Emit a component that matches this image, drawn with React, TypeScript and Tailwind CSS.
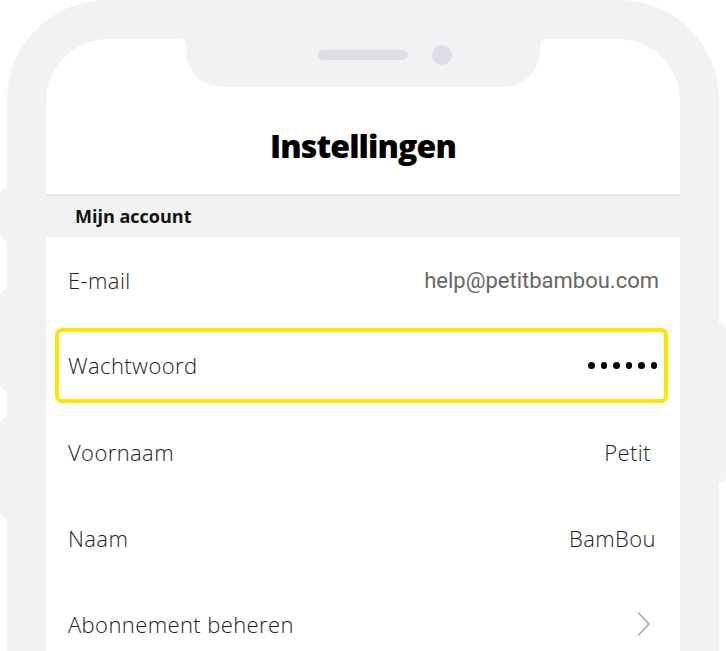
import React from "react";

const labelFont = { fontFamily: '"Open Sans", "Noto Sans", sans-serif' };

function Row({
  label,
  children,
  pr,
}: {
  label: string;
  children: React.ReactNode;
  pr: string;
}) {
  return (
    <div className={`h-[86px] flex items-center justify-between pl-[22px] ${pr}`}>
      <span className="text-[22px] font-light tracking-[0.4px] text-[#222]" style={labelFont}>
        {label}
      </span>
      {children}
    </div>
  );
}

export default function App() {
  return (
    <div className="relative w-[726px] h-[651px] overflow-hidden bg-white">
      {/* side buttons */}
      <div className="absolute left-0 top-[188px] w-[10px] h-[53px] rounded-l-[7px] bg-[#f2f2f4]" />
      <div className="absolute left-0 top-[289px] w-[10px] h-[102px] rounded-l-[7px] bg-[#f2f2f4]" />
      <div className="absolute left-0 top-[417px] w-[10px] h-[101px] rounded-l-[7px] bg-[#f2f2f4]" />
      <div className="absolute right-0 top-[323px] w-[10px] h-[160px] rounded-r-[7px] bg-[#f2f2f4]" />

      {/* phone frame */}
      <div className="relative ml-[7px] w-[712px] h-[760px] rounded-t-[100px] bg-[#f2f2f4] pt-[39px] px-[39px]">
        <div className="relative h-full bg-white rounded-t-[62px] overflow-hidden">
          {/* notch */}
          <div className="absolute top-0 left-[140px] w-[354px] h-[48px] bg-[#f2f2f4] rounded-b-[36px] flex items-start justify-start pl-[132px] pt-[11px] gap-[24px]">
            <div className="w-[90px] h-[10px] rounded-full bg-[#dedee8]" />
            <div className="w-[20px] h-[20px] rounded-full bg-[#dedee8] -mt-[5px]" />
          </div>
          <div className="absolute top-0 left-[134px] w-[6px] h-[6px] bg-[#f2f2f4]">
            <div className="w-full h-full bg-white rounded-tr-[6px]" />
          </div>
          <div className="absolute top-0 left-[494px] w-[6px] h-[6px] bg-[#f2f2f4]">
            <div className="w-full h-full bg-white rounded-tl-[6px]" />
          </div>

          {/* header */}
          <div className="h-[156px] pt-[87px] flex justify-center border-b border-[#e4e4e4] shadow-[0_1px_3px_rgba(0,0,0,0.08)] relative z-10">
            <h1
              className="text-[32px] leading-[40px] font-extrabold tracking-[-0.9px] text-black"
              style={labelFont}
            >
              Instellingen
            </h1>
          </div>

          {/* section header */}
          <div className="h-[42px] bg-[#f2f2f2] flex items-center pl-[29px]">
            <span className="text-[18px] font-bold text-[#111]" style={labelFont}>
              Mijn account
            </span>
          </div>

          <Row label="E-mail" pr="pr-[21px]">
            <span
              className="text-[22px] text-[#666]"
              style={{ fontFamily: 'Roboto, "Liberation Sans", sans-serif' }}
            >
              help@petitbambou.com
            </span>
          </Row>

          <div className="h-[86px] pt-[5px] pb-[6px] pl-[9px] pr-[12px]">
            <div className="h-full border-4 border-[#ffe600] rounded-[7px] flex items-center justify-between pl-[9px] pr-[7px]">
              <span className="text-[22px] font-light tracking-[0.4px] text-[#222]" style={labelFont}>
                Wachtwoord
              </span>
              <div className="flex gap-[6px]">
                {[0, 1, 2, 3, 4, 5].map((i) => (
                  <div key={i} className="w-[6.5px] h-[6.5px] rounded-full bg-black" />
                ))}
              </div>
            </div>
          </div>

          <Row label="Voornaam" pr="pr-[29px]">
            <span className="text-[22px] font-light tracking-[0.4px] text-[#222]" style={labelFont}>
              Petit
            </span>
          </Row>

          <Row label="Naam" pr="pr-[24px]">
            <span className="text-[22px] font-light tracking-[0.4px] text-[#222]" style={labelFont}>
              BamBou
            </span>
          </Row>

          <Row label="Abonnement beheren" pr="pr-[29px]">
            <svg width="15" height="26" viewBox="0 0 15 26" fill="none">
              <path d="M2 1.5 L13 13 L2 24.5" stroke="#aaaaaa" strokeWidth="1.6" />
            </svg>
          </Row>
        </div>
      </div>
    </div>
  );
}
